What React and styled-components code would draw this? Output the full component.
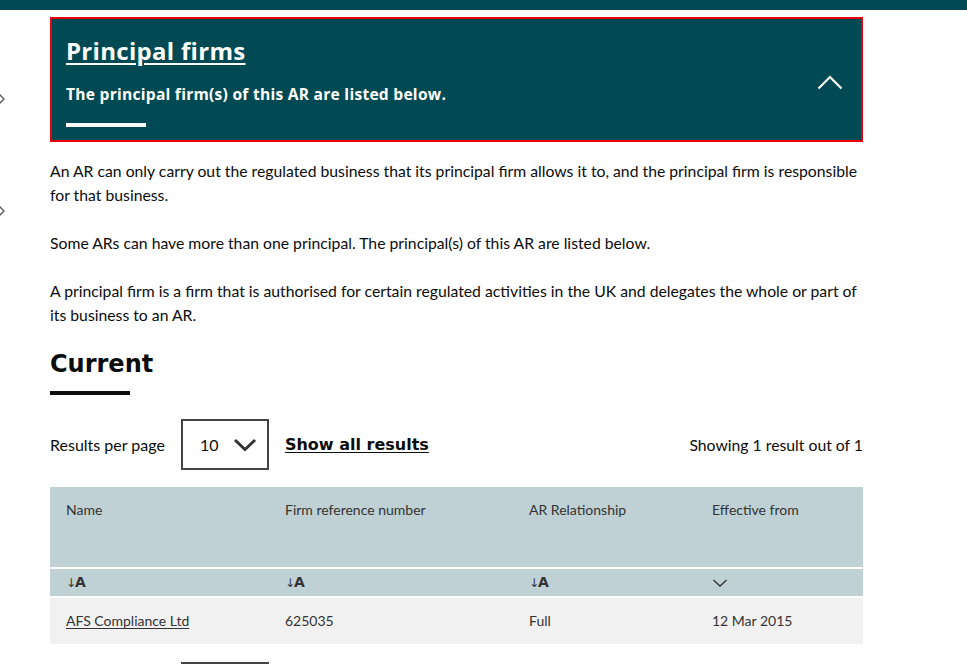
import React from "react";
import styled, { createGlobalStyle } from "styled-components";

const Global = createGlobalStyle`
  html, body { margin: 0; padding: 0; background: #fff; }
  body { font-family: Lato, "Open Sans", sans-serif; color: #0b0c0c; overflow: hidden; }
  * { box-sizing: border-box; }
`;

const TopBar = styled.div`
  height: 10px;
  background: #014a53;
`;

const Layout = styled.div`
  display: flex;
  padding-top: 7px;
`;

const Gutter = styled.div`
  width: 50px;
  display: flex;
  flex-direction: column;
  padding-top: 76px;
  gap: 100px;
`;

const SideChevron = styled.svg`
  display: block;
  margin-left: -3px;
`;

const Main = styled.main`
  width: 813px;
`;

const Panel = styled.section`
  display: flex;
  align-items: center;
  background: #014a53;
  border: 2px solid #e8000b;
  padding: 17px 18px 13px 14px;
`;

const PanelText = styled.div`
  flex: 1;
  display: flex;
  flex-direction: column;
  align-items: flex-start;
`;

const PanelTitle = styled.h2`
  margin: 0;
  font-family: "Open Sans", sans-serif;
  font-weight: 700;
  font-size: 24px;
  line-height: 30px;
  color: #fff;
  text-decoration: underline;
  text-decoration-thickness: 2px;
  text-underline-offset: 3px;
  letter-spacing: 0.3px;
`;

const PanelSub = styled.p`
  margin: 18px 0 0;
  font-family: "Open Sans", sans-serif;
  font-weight: 700;
  font-size: 15.6px;
  line-height: 20px;
  color: #fff;
  letter-spacing: 0.25px;
`;

const Bar = styled.div`
  width: 80px;
  height: 4px;
  background: ${(p) => p.$color || "#fff"};
  margin-top: ${(p) => p.$mt || 0}px;
`;

const Para = styled.p`
  margin: ${(p) => (p.$first ? "17px" : "24px")} 0 0;
  font-size: 15.75px;
  line-height: 24px;
  color: #0b0c0c;
`;

const Heading = styled.h3`
  margin: 22px 0 0;
  font-family: "DejaVu Sans", Verdana, sans-serif;
  font-weight: 700;
  font-size: 24px;
  line-height: 30px;
  color: #0b0c0c;
`;

const Controls = styled.div`
  display: flex;
  align-items: center;
  margin-top: 24px;
  height: 51px;
`;

const Label = styled.span`
  font-size: 16px;
  color: #0b0c0c;
`;

const Select = styled.div`
  display: flex;
  align-items: center;
  justify-content: space-between;
  width: 88px;
  height: 51px;
  margin-left: 16px;
  border: 2px solid #444;
  padding: 0 10px 0 17px;
  font-size: 16px;
  color: #0b0c0c;
`;

const ShowAll = styled.a`
  margin-left: 16px;
  font-family: "DejaVu Sans", Verdana, sans-serif;
  font-weight: 700;
  font-size: 16px;
  color: #0b0c0c;
  text-decoration: underline;
  text-underline-offset: 2px;
`;

const Showing = styled.span`
  margin-left: auto;
  font-size: 15.75px;
  color: #0b0c0c;
`;

const Table = styled.div`
  margin-top: 17px;
  display: flex;
  flex-direction: column;
  gap: 2px;
`;

const Row = styled.div`
  display: grid;
  grid-template-columns: 219px 244px 183px 167px;
  height: ${(p) => p.$h}px;
  background: ${(p) => p.$bg};
  align-items: ${(p) => p.$align || "center"};
`;

const Cell = styled.div`
  padding: ${(p) => p.$pt || 0}px 0 0 16px;
  font-size: 14px;
  line-height: 20px;
  color: #333;
`;

const SortIcon = styled.span`
  display: inline-flex;
  align-items: baseline;
  color: #333;
`;

const Arrow = styled.span`
  font-family: "DejaVu Sans", sans-serif;
  font-size: 12px;
  margin-right: -1px;
`;

const SortA = styled.span`
  font-family: "DejaVu Sans", sans-serif;
  font-weight: 700;
  font-size: 14px;
`;

const FirmLink = styled.a`
  color: #333;
  text-decoration: underline;
  text-underline-offset: 2px;
`;

const Pager = styled.div`
  margin: 18px 0 0 131px;
  width: 88px;
  height: 40px;
  border: 2px solid #444;
`;

const SortMark = () => (
  <SortIcon>
    <Arrow>↓</Arrow>
    <SortA>A</SortA>
  </SortIcon>
);

export default function App() {
  return (
    <>
      <Global />
      <TopBar />
      <Layout>
        <Gutter>
          <SideChevron width="10" height="12" viewBox="0 0 10 12">
            <path d="M2 1 L7 6 L2 11" fill="none" stroke="#555" strokeWidth="1.3" />
          </SideChevron>
          <SideChevron width="10" height="12" viewBox="0 0 10 12">
            <path d="M2 1 L7 6 L2 11" fill="none" stroke="#555" strokeWidth="1.3" />
          </SideChevron>
        </Gutter>
        <Main>
          <Panel>
            <PanelText>
              <PanelTitle>Principal firms</PanelTitle>
              <PanelSub>The principal firm(s) of this AR are listed below.</PanelSub>
              <Bar $mt={19} />
            </PanelText>
            <svg width="26" height="16" viewBox="0 0 26 16">
              <path d="M1.5 14.5 L13 3 L24.5 14.5" fill="none" stroke="#fff" strokeWidth="2.2" />
            </svg>
          </Panel>
          <Para $first>
            An AR can only carry out the regulated business that its principal firm allows it to, and the principal firm is responsible for that business.
          </Para>
          <Para>Some ARs can have more than one principal. The principal(s) of this AR are listed below.</Para>
          <Para>
            A principal firm is a firm that is authorised for certain regulated activities in the UK and delegates the whole or part of its business to an AR.
          </Para>
          <Heading>Current</Heading>
          <Bar $color="#0b0c0c" $mt={12} />
          <Controls>
            <Label>Results per page</Label>
            <Select>
              <span>10</span>
              <svg width="24" height="14" viewBox="0 0 24 14">
                <path d="M2 2 L12 11.5 L22 2" fill="none" stroke="#333" strokeWidth="3" />
              </svg>
            </Select>
            <ShowAll>Show all results</ShowAll>
            <Showing>Showing 1 result out of 1</Showing>
          </Controls>
          <Table>
            <Row $h={80} $bg="#bfd1d4" $align="start">
              <Cell $pt={13}>Name</Cell>
              <Cell $pt={13}>Firm reference number</Cell>
              <Cell $pt={13}>AR Relationship</Cell>
              <Cell $pt={13}>Effective from</Cell>
            </Row>
            <Row $h={27} $bg="#bfd1d4">
              <Cell><SortMark /></Cell>
              <Cell><SortMark /></Cell>
              <Cell><SortMark /></Cell>
              <Cell>
                <svg width="16" height="10" viewBox="0 0 16 10" style={{ display: "block" }}>
                  <path d="M1.5 2 L8 8 L14.5 2" fill="none" stroke="#333" strokeWidth="1.3" />
                </svg>
              </Cell>
            </Row>
            <Row $h={46} $bg="#f1f1f1">
              <Cell><FirmLink>AFS Compliance Ltd</FirmLink></Cell>
              <Cell>625035</Cell>
              <Cell>Full</Cell>
              <Cell>12 Mar 2015</Cell>
            </Row>
          </Table>
          <Pager />
        </Main>
      </Layout>
    </>
  );
}
